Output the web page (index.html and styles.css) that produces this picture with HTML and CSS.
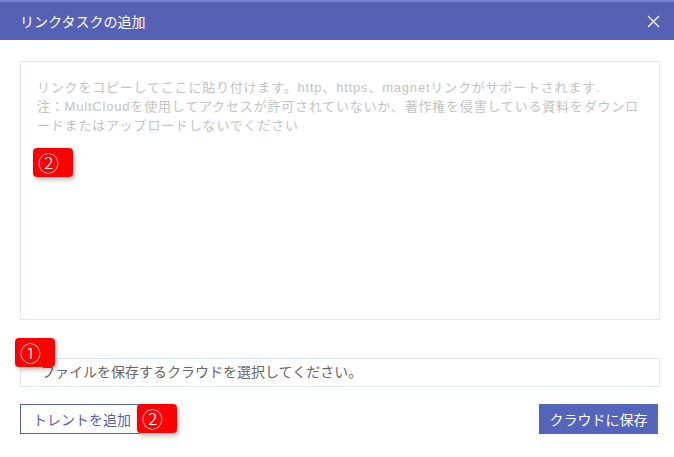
FILE: index.html
```html
<!DOCTYPE html>
<html lang="ja">
<head>
  <meta charset="UTF-8">
  <title>リンクタスクの追加</title>
  <link rel="stylesheet" href="styles.css">
</head>
<body>
  <div class="dialog">
    <div class="dialog-head">
      <span class="dialog-title">リンクタスクの追加</span>
      <span class="dialog-close">
        <svg width="13" height="13" viewBox="0 0 13 13"><path d="M1 1L12 12M12 1L1 12" stroke="#fff" stroke-width="1.3" fill="none"/></svg>
      </span>
    </div>
    <div class="dialog-body">
      <div class="link-box">
        <textarea class="link-input" placeholder="リンクをコピーしてここに貼り付けます。http、https、magnetリンクがサポートされます.&#10;注：MultCloudを使用してアクセスが許可されていないか、著作権を侵害している資料をダウンロードまたはアップロードしないでください"></textarea>
        <span class="mark mark-link">②</span>
      </div>
      <div class="cloud-box">
        <div class="cloud-select">ファイルを保存するクラウドを選択してください。</div>
        <span class="mark mark-cloud">①</span>
      </div>
      <div class="dialog-foot">
        <div class="torrent-wrap">
          <button class="btn btn-line">トレントを追加</button>
          <span class="mark mark-torrent">②</span>
        </div>
        <button class="btn btn-main">クラウドに保存</button>
      </div>
    </div>
  </div>
</body>
</html>
```

FILE: styles.css
```css
/*common*/
* {
  box-sizing: border-box;
  margin: 0;
  padding: 0;
}
body {
  font-family: "Liberation Sans", "Noto Sans CJK JP", sans-serif;
  font-size: 14px;
  background: #fff;
}
.dialog {
  width: 674px;
  height: 457px;
  background: #fff;
}
.dialog-head {
  height: 40px;
  background: #5561b3;
  border-top: 2px solid #7a84d2;
  display: flex;
  align-items: center;
  justify-content: space-between;
  padding: 0 14px 0 20px;
  color: #fff;
}
.dialog-title {
  font-size: 14px;
}
.dialog-close {
  display: flex;
  margin-top: 1px;
}
.dialog-body {
  padding: 21px 14px 0 20px;
}
.link-box {
  position: relative;
}
.link-input {
  display: block;
  width: 100%;
  height: 259px;
  border: 1px solid #dcebf0;
  resize: none;
  outline: none;
  padding: 16px 12px 16px 16px;
  font-family: "Liberation Sans", "Noto Sans CJK JP", sans-serif;
  font-size: 13px;
  letter-spacing: 0.8px;
  line-height: 19px;
  color: #333;
}
.link-input::placeholder {
  color: #c3c3c3;
}
.cloud-box {
  position: relative;
  margin-top: 38px;
}
.cloud-select {
  height: 29px;
  border: 1px solid #dcebf0;
  padding-left: 20px;
  line-height: 27px;
  color: #666;
}
.dialog-foot {
  display: flex;
  justify-content: space-between;
  margin-top: 17px;
  padding-right: 2px;
}
.torrent-wrap {
  position: relative;
}
.btn {
  height: 30px;
  font-family: "Liberation Sans", "Noto Sans CJK JP", sans-serif;
  font-size: 14px;
  cursor: pointer;
}
.btn-line {
  width: 120px;
  border: 1px solid #5561b3;
  background: #fff;
  color: #5561b3;
  text-align: left;
  padding-left: 12px;
}
.btn-main {
  width: 119px;
  border: none;
  background: #5465bb;
  color: #fff;
}
/* red step marks */
.mark {
  position: absolute;
  width: 40px;
  height: 29px;
  background: #ff0000;
  border-radius: 4px;
  box-shadow: 2px 3px 4px rgba(0, 0, 0, 0.25);
  color: #fff;
  font-size: 21px;
  font-weight: 300;
  line-height: 29px;
  padding-left: 5px;
  font-family: "Noto Sans CJK JP", sans-serif;
}
.mark-link {
  left: 13px;
  top: 87px;
}
.mark-cloud {
  left: -5px;
  top: -20px;
}
.mark-torrent {
  left: 117px;
  top: 0;
}
```
